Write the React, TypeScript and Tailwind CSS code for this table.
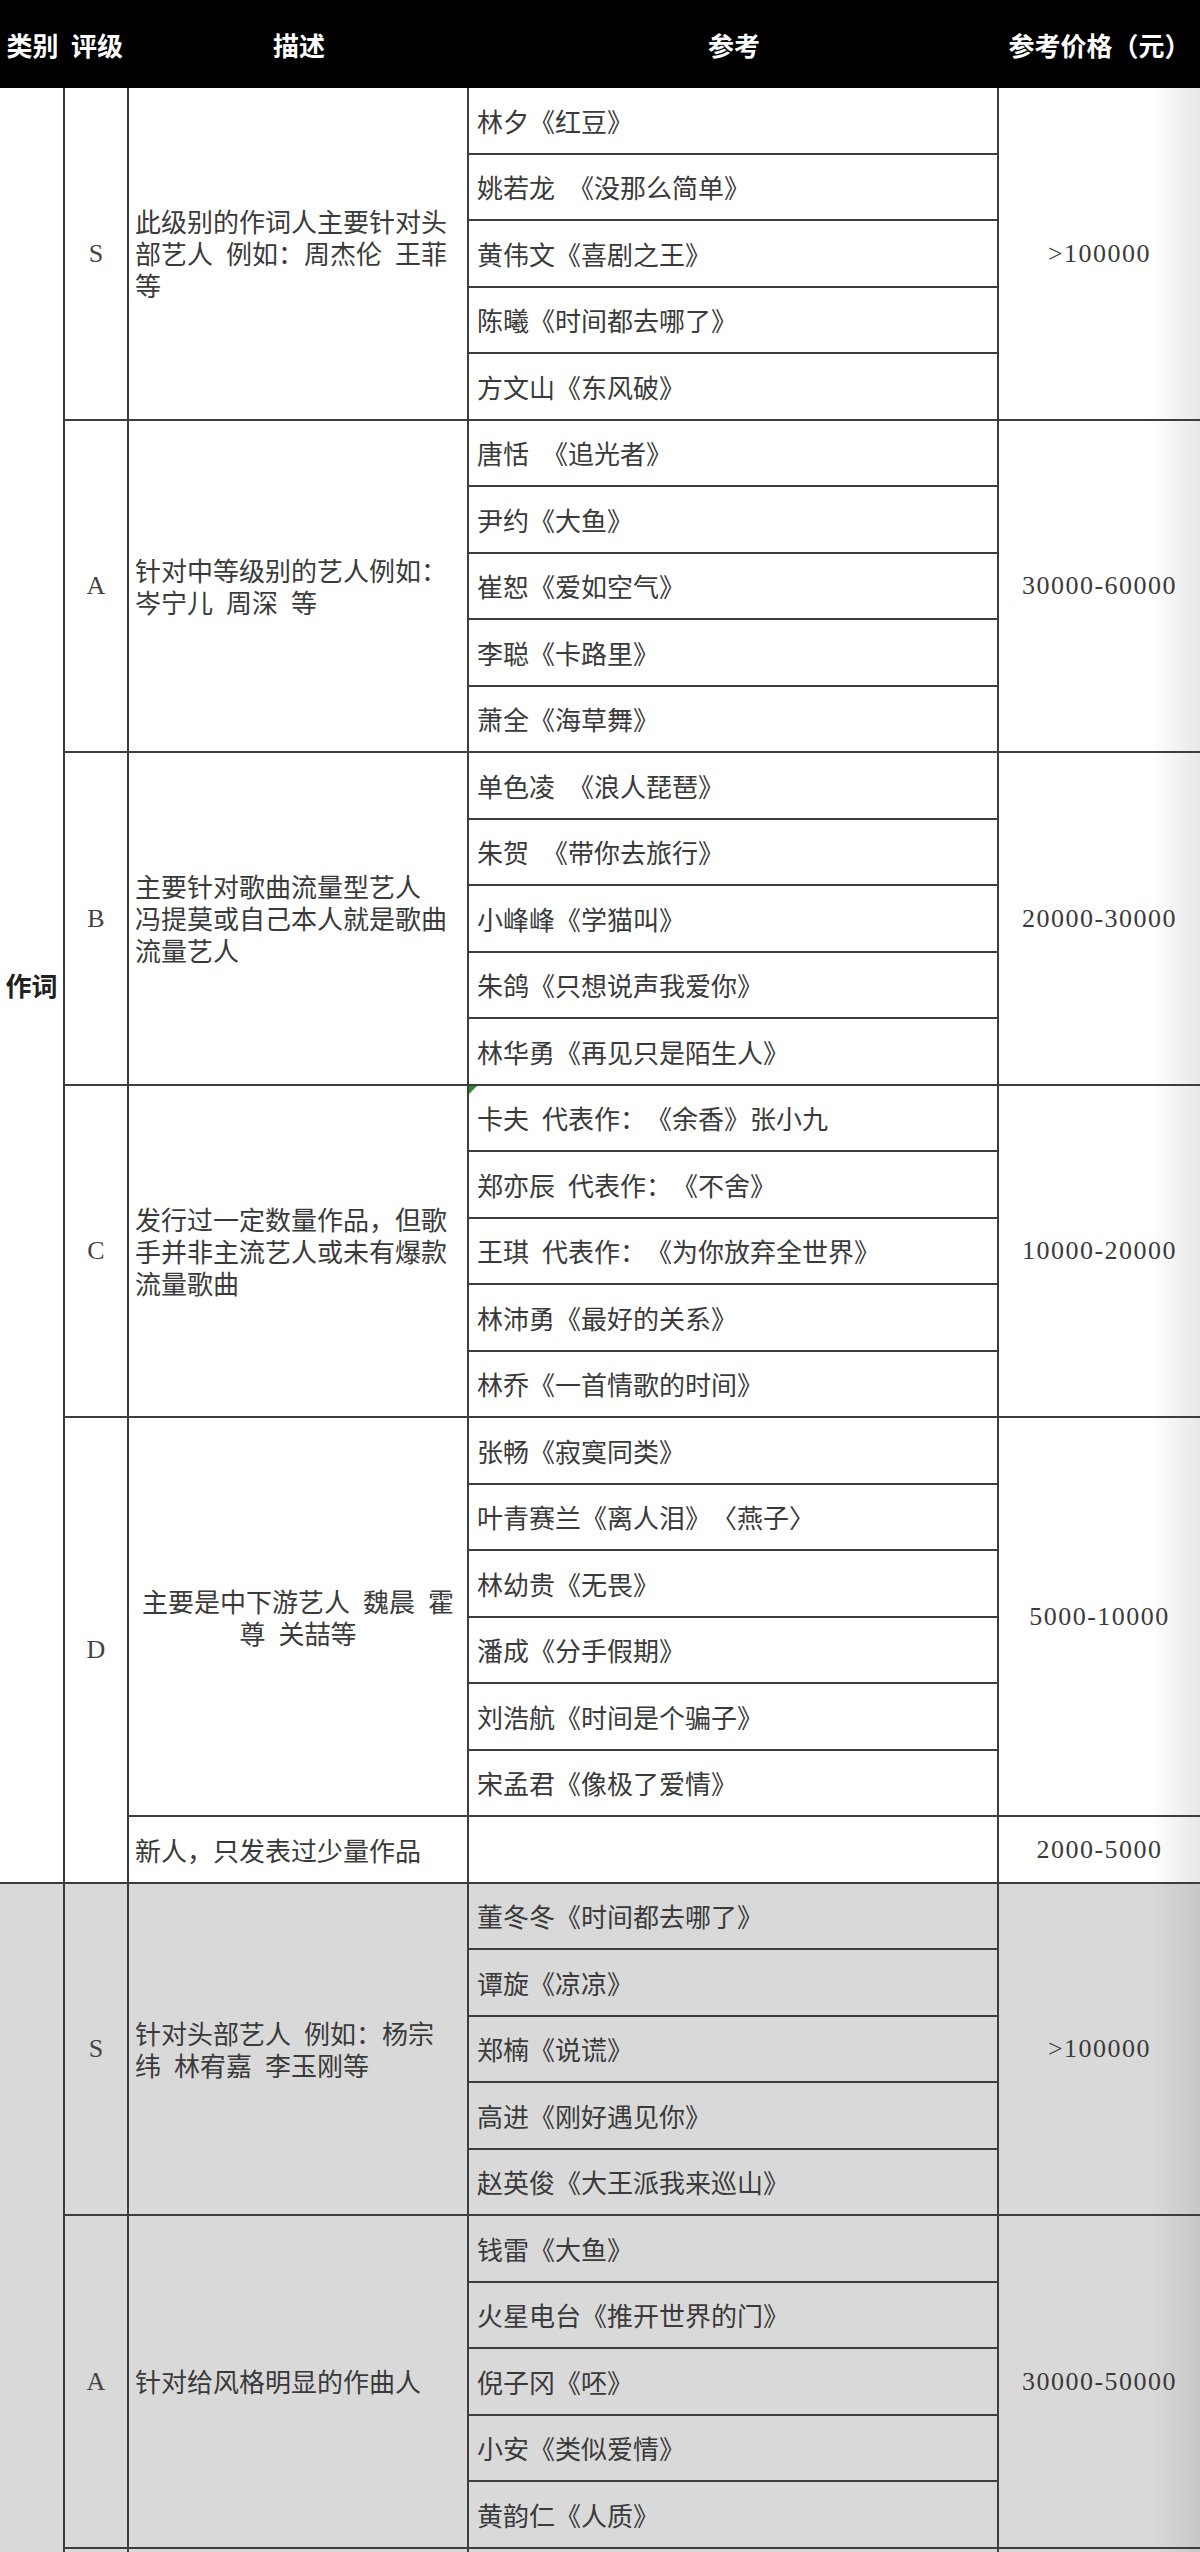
import React from "react";

type Group = {
  level: string;
  desc: string[];
  center?: boolean;
  refs: string[];
  price: string;
  extra?: { desc: string; price: string };
  markFirst?: boolean;
};

const S = "\u2002";

const lyricGroups: Group[] = [
  {
    level: "S",
    desc: ["此级别的作词人主要针对头", `部艺人${S}例如：周杰伦${S}王菲`, "等"],
    refs: ["林夕《红豆》", `姚若龙${S}《没那么简单》`, "黄伟文《喜剧之王》", "陈曦《时间都去哪了》", "方文山《东风破》"],
    price: ">100000",
  },
  {
    level: "A",
    desc: ["针对中等级别的艺人例如：", `岑宁儿${S}周深${S}等`],
    refs: [`唐恬${S}《追光者》`, "尹约《大鱼》", "崔恕《爱如空气》", "李聪《卡路里》", "萧全《海草舞》"],
    price: "30000-60000",
  },
  {
    level: "B",
    desc: ["主要针对歌曲流量型艺人", "冯提莫或自己本人就是歌曲", "流量艺人"],
    refs: [`单色凌${S}《浪人琵琶》`, `朱贺${S}《带你去旅行》`, "小峰峰《学猫叫》", "朱鸽《只想说声我爱你》", "林华勇《再见只是陌生人》"],
    price: "20000-30000",
  },
  {
    level: "C",
    desc: ["发行过一定数量作品，但歌", "手并非主流艺人或未有爆款", "流量歌曲"],
    refs: [
      `卡夫${S}代表作：《余香》张小九`,
      `郑亦辰${S}代表作：《不舍》`,
      `王琪${S}代表作：《为你放弃全世界》`,
      "林沛勇《最好的关系》",
      "林乔《一首情歌的时间》",
    ],
    price: "10000-20000",
    markFirst: true,
  },
  {
    level: "D",
    desc: [`主要是中下游艺人${S}魏晨${S}霍`, `尊${S}关喆等`],
    center: true,
    refs: ["张畅《寂寞同类》", "叶青赛兰《离人泪》〈燕子〉", "林幼贵《无畏》", "潘成《分手假期》", "刘浩航《时间是个骗子》", "宋孟君《像极了爱情》"],
    price: "5000-10000",
    extra: { desc: "新人，只发表过少量作品", price: "2000-5000" },
  },
];

const composeGroups: Group[] = [
  {
    level: "S",
    desc: [`针对头部艺人${S}例如：杨宗`, `纬${S}林宥嘉${S}李玉刚等`],
    refs: ["董冬冬《时间都去哪了》", "谭旋《凉凉》", "郑楠《说谎》", "高进《刚好遇见你》", "赵英俊《大王派我来巡山》"],
    price: ">100000",
  },
  {
    level: "A",
    desc: ["针对给风格明显的作曲人"],
    refs: ["钱雷《大鱼》", "火星电台《推开世界的门》", "倪子冈《呸》", "小安《类似爱情》", "黄韵仁《人质》"],
    price: "30000-50000",
  },
];

const SPAN: Record<number, string> = {
  1: "row-span-1",
  5: "row-span-5",
  6: "row-span-6",
  7: "row-span-7",
  11: "row-span-11",
  27: "row-span-27",
};

const LINE = "border-r-2 border-b-2 border-[#3d3d3d]";
const LAST = "border-b-2 border-[#3d3d3d]";
const SERIF = "font-['Liberation_Serif',serif]";

function Section({
  label,
  groups,
  gray,
  trailing,
}: {
  label: string;
  groups: Group[];
  gray?: boolean;
  trailing?: boolean;
}) {
  const bg = gray ? "bg-[#d9d9d9]" : "bg-white";
  const priceBg = gray
    ? "bg-linear-to-r from-[#d9d9d9] from-75% to-[#c8c8c8]"
    : "bg-linear-to-r from-white from-75% to-[#e8e8e8]";
  const total =
    groups.reduce((n, g) => n + g.refs.length + (g.extra ? 1 : 0), 0) + (trailing ? 1 : 0);

  const cells: React.ReactNode[] = [];
  cells.push(
    <div
      key="label"
      className={`col-start-1 ${SPAN[total]} ${LINE} ${bg} flex items-center justify-center font-bold text-[#222]`}
    >
      {label}
    </div>
  );

  groups.forEach((g, gi) => {
    const n = g.refs.length;
    const levelSpan = n + (g.extra ? 1 : 0);
    g.refs.forEach((r, ri) => {
      if (ri === 0) {
        cells.push(
          <div
            key={`lv${gi}`}
            className={`col-start-2 ${SPAN[levelSpan]} ${LINE} ${bg} ${SERIF} flex items-center justify-center text-[#444]`}
          >
            {g.level}
          </div>
        );
        cells.push(
          <div
            key={`ds${gi}`}
            className={`col-start-3 ${SPAN[n]} ${LINE} ${bg} flex flex-col justify-center whitespace-nowrap leading-[32px] ${
              g.center ? "items-center text-center" : "pl-[6px]"
            }`}
          >
            {g.desc.map((d, di) => (
              <span key={di}>{d}</span>
            ))}
          </div>
        );
      }
      cells.push(
        <div
          key={`rf${gi}-${ri}`}
          className={`relative col-start-4 row-span-1 ${LINE} ${bg} flex items-center whitespace-nowrap pl-[8px]`}
        >
          {g.markFirst && ri === 0 && (
            <svg className="absolute left-0 top-0" width="8" height="8" viewBox="0 0 8 8">
              <polygon points="0,0 8,0 0,8" fill="#2f8a2f" />
            </svg>
          )}
          {r}
        </div>
      );
      if (ri === 0) {
        cells.push(
          <div
            key={`pr${gi}`}
            className={`col-start-5 ${SPAN[n]} ${LAST} ${priceBg} ${SERIF} flex items-center justify-center tracking-[1.5px]`}
          >
            {g.price}
          </div>
        );
      }
    });
    if (g.extra) {
      cells.push(
        <div
          key={`exd${gi}`}
          className={`col-start-3 row-span-1 ${LINE} ${bg} flex items-center whitespace-nowrap pl-[6px]`}
        >
          {g.extra.desc}
        </div>
      );
      cells.push(<div key={`exr${gi}`} className={`col-start-4 row-span-1 ${LINE} ${bg}`} />);
      cells.push(
        <div
          key={`exp${gi}`}
          className={`col-start-5 row-span-1 ${LAST} ${priceBg} ${SERIF} flex items-center justify-center tracking-[1.5px]`}
        >
          {g.extra.price}
        </div>
      );
    }
  });

  if (trailing) {
    cells.push(<div key="t2" className={`col-start-2 row-span-1 ${LINE} ${bg}`} />);
    cells.push(<div key="t3" className={`col-start-3 row-span-1 ${LINE} ${bg}`} />);
    cells.push(<div key="t4" className={`col-start-4 row-span-1 ${LINE} ${bg}`} />);
    cells.push(<div key="t5" className={`col-start-5 row-span-1 ${LAST} ${priceBg}`} />);
  }

  return (
    <div className="grid grid-cols-[65px_64px_340px_530px_201px] auto-rows-[66.5px]">{cells}</div>
  );
}

export default function App() {
  return (
    <div className="w-[1200px] overflow-hidden bg-white font-['Noto_Sans_CJK_SC',sans-serif] text-[26px] text-[#3a3a3a] [text-spacing-trim:space-all]">
      <div className="grid h-[88px] grid-cols-[65px_64px_340px_530px_201px] items-center bg-black text-[26px] font-bold text-white">
        <div className="text-center">类别</div>
        <div className="text-center">评级</div>
        <div className="text-center">描述</div>
        <div className="text-center">参考</div>
        <div className="text-center whitespace-nowrap">参考价格（元）</div>
      </div>
      <Section label="作词" groups={lyricGroups} />
      <Section label="" groups={composeGroups} gray trailing />
    </div>
  );
}
